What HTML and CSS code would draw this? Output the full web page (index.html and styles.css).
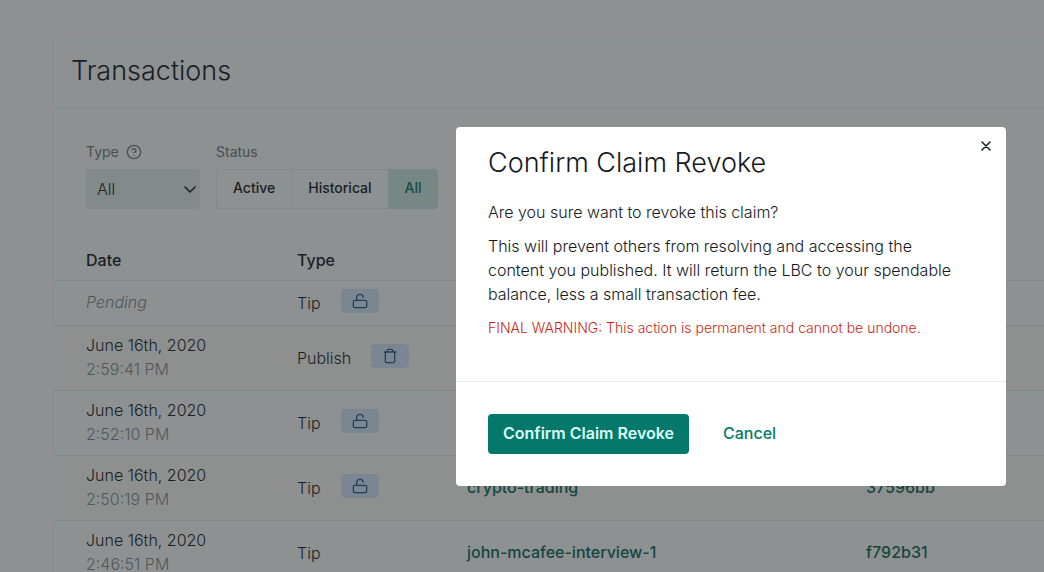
FILE: index.html
```html
<!DOCTYPE html>
<html lang="en">
<head>
<meta charset="utf-8">
<title>Transactions</title>
<link rel="stylesheet" href="styles.css">
</head>
<body>
<svg class="sprite" aria-hidden="true">
  <symbol id="unlock" viewBox="0 0 24 24"><rect x="2" y="11" width="20" height="11" rx="2"/><path d="M7 11V7a5 5 0 0 1 9.9-1"/></symbol>
  <symbol id="trash" viewBox="0 0 24 24"><path d="M3 6h18M19 6v14a2 2 0 0 1-2 2H7a2 2 0 0 1-2-2V6M8 6V4a2 2 0 0 1 2-2h4a2 2 0 0 1 2 2v2"/></symbol>
</svg>
<main class="card">
  <header class="card-header"><h1 class="title">Transactions</h1></header>
  <div class="filters">
    <div class="field">
      <div class="label-row">
        <label class="label" for="type">Type</label>
        <svg class="icon" viewBox="0 0 24 24"><circle cx="12" cy="12" r="10"/><path d="M9.1 9a3 3 0 0 1 5.8 1c0 2-3 3-3 3M12 17h.01"/></svg>
      </div>
      <div class="select-wrap">
        <select class="select" id="type"><option>All</option></select>
        <svg class="chevron" viewBox="0 0 12 8"><path d="M1 1l5 5 5-5"/></svg>
      </div>
    </div>
    <div class="field">
      <div class="label-row label" id="status">Status</div>
      <div class="toggle" role="group" aria-labelledby="status">
        <button class="toggle-button">Active</button>
        <button class="toggle-button">Historical</button>
        <button class="toggle-button active">All</button>
      </div>
    </div>
  </div>
  <table class="table">
    <colgroup><col class="col-date"><col class="col-type"><col class="col-details"><col></colgroup>
    <thead><tr><th>Date</th><th>Type</th><th></th><th></th></tr></thead>
    <tbody>
      <tr class="pending"><td><em class="muted">Pending</em></td><td><div class="kind">Tip<button class="action" aria-label="Unlock"><svg class="icon"><use href="#unlock"/></svg></button></div></td><td></td><td></td></tr>
      <tr><td>June 16th, 2020<div class="muted">2:59:41 PM</div></td><td><div class="kind">Publish<button class="action" aria-label="Delete"><svg class="icon"><use href="#trash"/></svg></button></div></td><td></td><td></td></tr>
      <tr><td>June 16th, 2020<div class="muted">2:52:10 PM</div></td><td><div class="kind">Tip<button class="action" aria-label="Unlock"><svg class="icon"><use href="#unlock"/></svg></button></div></td><td></td><td></td></tr>
      <tr><td>June 16th, 2020<div class="muted">2:50:19 PM</div></td><td><div class="kind">Tip<button class="action" aria-label="Unlock"><svg class="icon"><use href="#unlock"/></svg></button></div></td><td><a class="link" href="#">crypto-trading</a></td><td><a class="link" href="#">37596bb</a></td></tr>
      <tr><td>June 16th, 2020<div class="muted">2:46:51 PM</div></td><td><div class="kind">Tip</div></td><td><a class="link" href="#">john-mcafee-interview-1</a></td><td><a class="link" href="#">f792b31</a></td></tr>
    </tbody>
  </table>
</main>
<div class="overlay">
  <section class="modal" role="dialog" aria-modal="true" aria-labelledby="modal-title">
    <button class="close" aria-label="Close"><svg class="close-icon" viewBox="0 0 10 10"><path d="M1 1l8 8M9 1L1 9"/></svg></button>
    <div class="modal-body">
      <h2 class="title" id="modal-title">Confirm Claim Revoke</h2>
      <p class="text">Are you sure want to revoke this claim?</p>
      <p class="text">This will prevent others from resolving and accessing the content you published. It will return the LBC to your spendable balance, less a small transaction fee.</p>
      <p class="warning">FINAL WARNING: This action is permanent and cannot be undone.</p>
    </div>
    <footer class="modal-actions">
      <button class="primary">Confirm Claim Revoke</button>
      <button class="cancel">Cancel</button>
    </footer>
  </section>
</div>
</body>
</html>
```
FILE: styles.css
```css
* { box-sizing: border-box; }
body {
  margin: 0;
  height: 100vh;
  overflow: hidden;
  padding: 36px 0 0 53px;
  background: #fcfdff;
  color: #15191d;
  font: 300 16px/24px Inter, sans-serif;
}
button, select { font: inherit; color: inherit; border: 0; margin: 0; }
h1, h2, p { margin: 0; }
.sprite { display: none; }
.icon { width: 16px; height: 16px; }
.icon, .chevron, .close-icon, symbol {
  fill: none;
  stroke: currentColor;
  stroke-width: 2;
  stroke-linecap: round;
  stroke-linejoin: round;
}
.card { background: #faffff; border-left: 1px solid #e8fbf9; }
.title { font-size: 27px; line-height: 36px; font-weight: 300; }
.card-header { padding: 17px 17px 19px; border-bottom: 1px solid #e6f3f1; }
.filters { display: flex; gap: 16px; padding: 33px 32px 29px; }
.label-row { display: flex; align-items: center; gap: 7px; height: 20px; margin-bottom: 7px; }
.label { font-size: 14px; line-height: 20px; color: #747a7e; font-weight: 400; }
.label-row .icon { color: #747a7e; }
.select-wrap { position: relative; width: 114px; }
.select {
  appearance: none;
  width: 100%;
  height: 40px;
  padding: 0 11px;
  border-radius: 4px;
  background: #e9eeee;
}
.chevron { position: absolute; right: 4px; top: 17px; width: 12px; height: 8px; stroke-width: 1.5; }
.toggle { display: flex; height: 40px; }
.toggle-button {
  padding: 0 16px 2px;
  border: 1px solid #e4ebeb;
  border-right-width: 0;
  background: transparent;
  font-size: 14px;
  line-height: 20px;
  font-weight: 500;
}
.toggle-button:first-child { border-radius: 4px 0 0 4px; }
.toggle-button.active { border-color: #cfebe3; border-radius: 0 4px 4px 0; background: #cfebe3; color: #087567; }
.table { width: 100%; table-layout: fixed; border-collapse: collapse; }
.col-date { width: 243px; }
.col-type { width: 170px; }
.col-details { width: 399px; }
th { padding: 10px 0 8px; text-align: left; font-weight: 500; }
td { padding: 7px 0 9px; }
td:nth-child(2) { padding: 8px 0; }
th:first-child, td:first-child { padding-left: 32px; }
tr { border-bottom: 1px solid #e2e9e8; }
tr:nth-child(even) { background: #fcfcfb; }
.pending { height: 44px; }
.muted { color: #858b90; }
.kind { display: flex; align-items: center; gap: 20px; }
.action {
  display: flex;
  align-items: center;
  justify-content: center;
  width: 38px;
  height: 24px;
  margin-bottom: 4px;
  padding: 0;
  border-radius: 4px;
  background: #d5eaff;
  color: #285a90;
}
.link { color: #08675b; font-weight: 500; text-decoration: none; }
.overlay {
  position: fixed;
  inset: 0;
  display: flex;
  align-items: flex-start;
  justify-content: flex-end;
  padding: 127px 38px 0 32px;
  background: rgba(32, 36, 38, 0.5);
}
.modal { position: relative; width: 100%; max-width: 550px; border-radius: 4px; background: #fefffe; }
.close { position: absolute; top: 7px; right: 8px; display: grid; place-items: center; width: 24px; height: 24px; padding: 0; background: none; }
.close-icon { width: 10px; height: 10px; stroke-width: 1.5; }
.modal-body { padding: 18px 32px 41px; }
.modal-body .title { margin-bottom: 19px; }
.text { max-width: 480px; margin-bottom: 10px; }
.warning { font-size: 14px; line-height: 24px; color: #cc1f16; }
.modal-actions { display: flex; align-items: center; gap: 34px; padding: 32px; border-top: 1px solid #ebeeee; }
.primary { height: 40px; padding: 0 15px 2px; border-radius: 4px; background: #04796b; color: #d9fff8; font-weight: 600; }
.cancel { padding: 0 0 2px; background: none; color: #04796b; font-weight: 500; }
```
